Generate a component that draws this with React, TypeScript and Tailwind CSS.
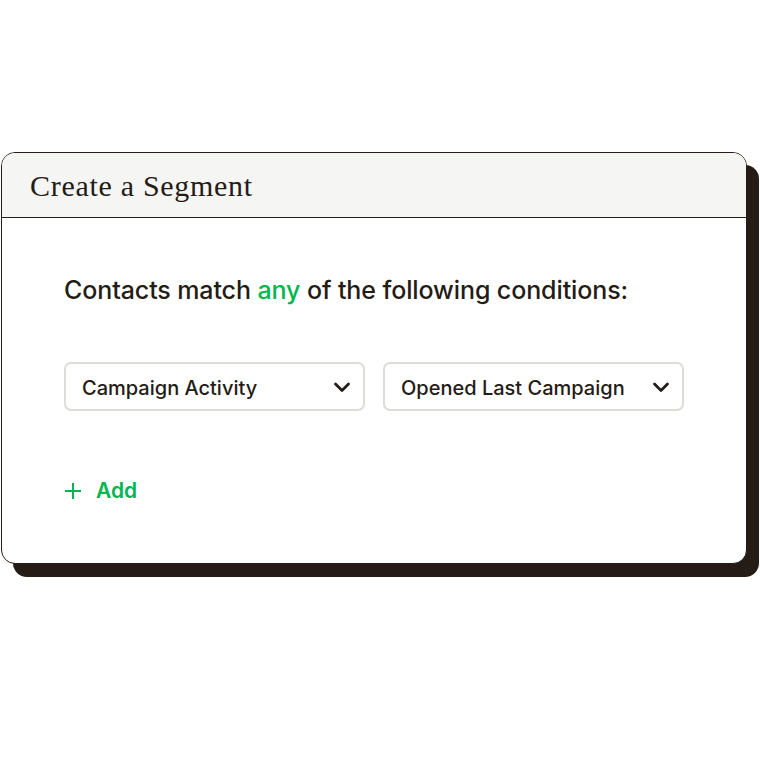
import * as React from "react";

const Chevron = () => (
    <svg width="20" height="20" viewBox="0 0 20 20" fill="none">
        <path d="M3.5 7l6.5 6.5L16.5 7" stroke="#241c15" strokeWidth="2.8" strokeLinecap="round" strokeLinejoin="round" />
    </svg>
);

const Select = ({label}: {label: string}) => (
    <div className="flex h-[49px] w-[302px] items-center justify-between rounded-[7px] border-2 border-[#dedcd6] bg-white pl-[16px] pr-[11px]">
        <span className="pt-[2px] text-[20px] font-medium text-[#241c15]">{label}</span>
        <Chevron />
    </div>
);

export default function App() {
    return (
        <div className="h-[760px] w-[760px] bg-white pt-[152px] pl-[1px]" style={{fontFamily: 'Inter, "Liberation Sans", Arial, sans-serif'}}>
            <div className="w-[746px] overflow-hidden rounded-[14px] border-[1.5px] border-[#241c15] bg-white shadow-[12px_13px_0_#241c15]">
                <div className="flex h-[65px] items-center border-b-[1.5px] border-[#241c15] bg-[#f5f5f3] pl-[28px]">
                    <h1 className="text-[30px] tracking-[0.7px] text-[#241c15]" style={{fontFamily: '"Liberation Serif", "Times New Roman", serif'}}>
                        Create a Segment
                    </h1>
                </div>
                <div className="px-[62px] pt-[57px] pb-[56px]">
                    <p className="text-[25px] font-medium leading-[30px] tracking-[-0.1px] text-[#241c15]">
                        Contacts match <span className="text-[#00b74f]">any</span> of the following conditions:
                    </p>
                    <div className="mt-[57px] flex gap-[18px]">
                        <Select label="Campaign Activity" />
                        <Select label="Opened Last Campaign" />
                    </div>
                    <div className="mt-[64px] flex items-center gap-[14px] text-[#00b74f]">
                        <svg width="18" height="18" viewBox="0 0 18 18" fill="none">
                            <path d="M9 1v16M1 9h16" stroke="#00b74f" strokeWidth="2" />
                        </svg>
                        <span className="text-[21px] font-semibold">Add</span>
                    </div>
                </div>
            </div>
        </div>
    );
}
